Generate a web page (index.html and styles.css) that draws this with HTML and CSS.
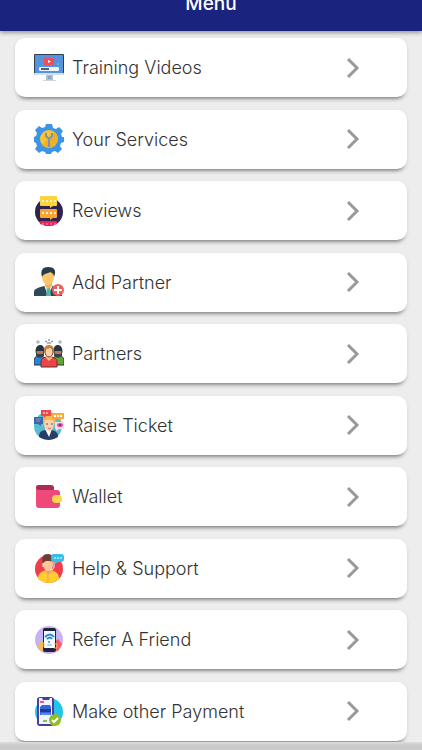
FILE: index.html
```html
<!doctype html>
<html lang="en">
<head>
	<meta charset="utf-8">
	<meta name="viewport" content="width=device-width, initial-scale=1">
	<title>Menu</title>
	<link rel="stylesheet" href="styles.css">
</head>
<body>

<header class="topbar">
	<h1>Menu</h1>
</header>

<nav class="menu">
	<a class="item" href="#training">
		<svg class="icon" viewBox="0 0 30 30">
			<rect x="0" y="1" width="30" height="21" rx="1" fill="#2f3e50"/>
			<rect x="1" y="2" width="28" height="18" fill="#5792dc"/>
			<path d="M0 20h30v1a1 1 0 0 1-1 1H1a1 1 0 0 1-1-1z" fill="#d5dfea"/>
			<rect x="10" y="5" width="10" height="7" rx="1" fill="#f04b58"/>
			<path d="M14 7l3 1.500-3 1.500z" fill="#fff"/>
			<circle cx="24" cy="11" r="1" fill="#4fd39a"/>
			<rect x="5" y="14" width="20" height="4" rx="1" fill="#eef4fb"/>
			<rect x="7" y="15" width="8" height="2" fill="#47627c"/>
			<path d="M12 22h7v5h-7z" fill="#b1bfd3"/>
			<path d="M14 23h3v3h-3z" fill="#8da4c4"/>
			<path d="M9 27h13v1H9z" fill="#cbd4e0"/>
		</svg>
		<span class="label">Training Videos</span>
		<svg class="arrow" viewBox="0 0 12 20"><path d="M1 1l9 9-9 9"/></svg>
	</a>
	<a class="item" href="#services">
		<svg class="icon" viewBox="0 0 30 30">
			<path d="M12 0h6l1 4 3 1 3-2 4 4-2 3 1 3 2 0v5l-3 1-1 3 2 3-4 4-3-2-3 1-1 2h-5l-1-2-3-1-3 2-4-4 2-3-1-3-2-1v-5l2-1 1-3-2-3 4-4 3 2 3-1z" fill="#3c94e8"/>
			<circle cx="15" cy="15" r="9" fill="#f7c52f"/>
			<path d="M21 8a9 9 0 0 1-13 13z" fill="#edaf2c"/>
			<path d="M12 9v3l3 3 3-3V9M15 15v8" fill="none" stroke="#8293a3" stroke-width="2"/>
		</svg>
		<span class="label">Your Services</span>
		<svg class="arrow" viewBox="0 0 12 20"><path d="M1 1l9 9-9 9"/></svg>
	</a>
	<a class="item" href="#reviews">
		<svg class="icon" viewBox="0 0 30 30">
			<circle cx="15" cy="16" r="14" fill="#2e244f"/>
			<path d="M7 0h15a1 1 0 0 1 1 1v8a1 1 0 0 1-1 1h-3l-3 2v-2H7a1 1 0 0 1-1-1V1a1 1 0 0 1 1-1z" fill="#ffd33b"/>
			<path d="M7 13h15a1 1 0 0 1 1 1v7a1 1 0 0 1-1 1h-3l-3 2v-2H7a1 1 0 0 1-1-1v-7a1 1 0 0 1 1-1z" fill="#fba52f"/>
			<path d="M6 26a1 1 0 0 1 1-1h15a1 1 0 0 1 1 1v2q-8 4-17 0z" fill="#e92458"/>
			<path d="M8 5h14M8 17h14" stroke="#fff6cf" stroke-width="2" stroke-dasharray="2 2"/>
			<path d="M8 28h14" stroke="#ff9db5" stroke-dasharray="2 2"/>
		</svg>
		<span class="label">Reviews</span>
		<svg class="arrow" viewBox="0 0 12 20"><path d="M1 1l9 9-9 9"/></svg>
	</a>
	<a class="item" href="#add-partner">
		<svg class="icon" viewBox="0 0 30 30">
			<path d="M0 29v-4c0-3 3-4 10-6h9c6 2 9 3 9 6v4z" fill="#30475a"/>
			<path d="M10 18l4 11 5-11z" fill="#f5f8f8"/>
			<path d="M13 20h3l1 9h-5z" fill="#4fb8aa"/>
			<path d="M11 15h7v4l-4 3-3-3z" fill="#edb45d"/>
			<ellipse cx="14" cy="10" rx="6" ry="8" fill="#fdc66c"/>
			<path d="M8 10C6 3 9 0 14 0c6 0 9 3 6 10 0-3-2-4-4-5-3 2-6 1-8 5z" fill="#273a4b"/>
			<circle cx="24" cy="23" r="6" fill="#ed615c"/>
			<path d="M24 19v8M20 23h8" stroke="#fff" stroke-width="2"/>
		</svg>
		<span class="label">Add Partner</span>
		<svg class="arrow" viewBox="0 0 12 20"><path d="M1 1l9 9-9 9"/></svg>
	</a>
	<a class="item" href="#partners">
		<svg class="icon" viewBox="0 0 30 30">
			<path d="M0 26v-5c0-3 3-4 6-4s5 1 5 4v5z" fill="#2786d4" stroke="#26323f"/>
			<path d="M19 26v-5c0-3 2-4 5-4s6 1 6 4v5z" fill="#61a630" stroke="#26323f"/>
			<ellipse cx="6" cy="12" rx="4" ry="5" fill="#b77954" stroke="#26323f"/>
			<ellipse cx="24" cy="12" rx="4" ry="5" fill="#b77954" stroke="#26323f"/>
			<path d="M2 12c-1-7 8-8 8-2v2H2zM28 12c1-7-8-8-8-2v2h8z" fill="#2a3440"/>
			<path d="M2 15h8v2l-4 2-4-2zM20 15h8v2l-4 2-4-2z" fill="#36414d"/>
			<path d="M7 28v-5c0-4 3-5 8-5s8 1 8 5v5z" fill="#ec4547" stroke="#6c2f37"/>
			<path d="M12 16h6v3l-3 3-3-3z" fill="#efb989"/>
			<ellipse cx="15" cy="13" rx="4" ry="5" fill="#ffd2a2" stroke="#71432e"/>
			<path d="M10 12c-1-8 11-8 10 0l-3-3-5 1z" fill="#c98239"/>
			<path d="M4 1v4M2 3h4M26 1v4M24 3h4" stroke="#9ba3ab"/>
			<path d="M11 2l2 1M15 0v2M19 2l-2 1M13 4h4" stroke="#68717c"/>
		</svg>
		<span class="label">Partners</span>
		<svg class="arrow" viewBox="0 0 12 20"><path d="M1 1l9 9-9 9"/></svg>
	</a>
	<a class="item" href="#ticket">
		<svg class="icon" viewBox="0 0 30 30">
			<circle cx="14" cy="16" r="14" fill="#58bdd0"/>
			<path d="M5 27c0-5 2-6 6-7h7c4 1 6 3 6 7q-9 6-19 0z" fill="#293e65"/>
			<path d="M11 19h7l-3 8z" fill="#fff"/>
			<ellipse cx="15" cy="14" rx="5" ry="7" fill="#ffd1ad"/>
			<path d="M9 15c-2-8 2-10 6-10s8 3 6 10l-2-5h-8z" fill="#f4b950"/>
			<path d="M12 14h2M17 14h2" stroke="#704e45"/>
			<path d="M14 18q1 1 3 0" fill="none" stroke="#d36d66"/>
			<path d="M7 0h10v6h-5l-2 2V6H7z" fill="#e94a4e"/>
			<path d="M9 3h6" stroke="#fff" stroke-dasharray="2 1"/>
			<path d="M18 3h12v6h-3v2l-3-2h-6z" fill="#fcaa35"/>
			<path d="M20 6h8" stroke="#fff" stroke-width="2" stroke-dasharray="2 1"/>
			<path d="M0 7h9v7H7v2l-3-2H0z" fill="#3c66a7"/>
			<path d="M2 9h5M2 11h4" stroke="#7b9cd4"/>
			<path d="M21 12h9v7h-5l-3 2v-2h-1z" fill="#f8dcec"/>
			<ellipse cx="26" cy="15" rx="3" ry="2" fill="#df4f9b"/>
			<circle cx="26" cy="15" r="1" fill="#573078"/>
		</svg>
		<span class="label">Raise Ticket</span>
		<svg class="arrow" viewBox="0 0 12 20"><path d="M1 1l9 9-9 9"/></svg>
	</a>
	<a class="item" href="#wallet">
		<svg class="icon" viewBox="0 0 30 30">
			<path d="M2 5a2 2 0 0 1 2-2h13a3 3 0 0 1 3 3v4H2z" fill="#aa2c58"/>
			<path d="M2 5q0 3 3 3h18a3 3 0 0 1 3 3v12a3 3 0 0 1-3 3H5a3 3 0 0 1-3-3z" fill="#ed4a79"/>
			<rect x="18" y="13" width="10" height="8" rx="4" fill="#ffd34e"/>
		</svg>
		<span class="label">Wallet</span>
		<svg class="arrow" viewBox="0 0 12 20"><path d="M1 1l9 9-9 9"/></svg>
	</a>
	<a class="item" href="#help">
		<svg class="icon" viewBox="0 0 30 30">
			<circle cx="15" cy="16" r="14" fill="#f03d4b"/>
			<path d="M4 26c0-5 2-7 8-9h5c6 2 8 4 8 9q-10 8-21 0z" fill="#ffcc32"/>
			<path d="M14 22v8" stroke="#f3ad20"/>
			<path d="M11 15h7v4l-4 3-3-3z" fill="#f2a36f"/>
			<ellipse cx="14" cy="11" rx="5" ry="7" fill="#ffc694"/>
			<path d="M9 11C7 4 9 1 14 1c4 0 6 3 5 7-4 1-8-2-10 3z" fill="#684036"/>
			<path d="M9 10v4M20 9v5q0 3-4 3" fill="none" stroke="#f4f5fa" stroke-width="1"/>
			<path d="M20 1h7a3 3 0 0 1 3 3v2a3 3 0 0 1-3 3h-3l-4 3 1-3h-1a3 3 0 0 1-3-3V4a3 3 0 0 1 3-3z" fill="#35bfe8"/>
			<path d="M20 5h8" stroke="#fff" stroke-width="1" stroke-dasharray="2 1"/>
		</svg>
		<span class="label">Help &amp; Support</span>
		<svg class="arrow" viewBox="0 0 12 20"><path d="M1 1l9 9-9 9"/></svg>
	</a>
	<a class="item" href="#refer">
		<svg class="icon" viewBox="0 0 30 30">
			<circle cx="15" cy="15" r="14" fill="#c5b4f5"/>
			<path d="M5 18l5-2v10H7q-3-2-3-5z" fill="#f6b851"/>
			<path d="M20 17l4-3 4 5-4 7-5-1z" fill="#f05c67"/>
			<rect x="9" y="3" width="13" height="24" rx="2" fill="#20233f"/>
			<rect x="10" y="6" width="11" height="17" fill="#f5fbff"/>
			<path d="M11 12q5-5 9 0M13 14q3-3 5 0" fill="none" stroke="#268cd6" stroke-width="2"/>
			<circle cx="15" cy="17" r="1" fill="#268cd6"/>
			<path d="M13 20h5" stroke="#88a7dd"/>
			<path d="M5 18h5v3H7M20 19h3v4h-3" fill="none" stroke="#f7b553" stroke-width="1"/>
		</svg>
		<span class="label">Refer A Friend</span>
		<svg class="arrow" viewBox="0 0 12 20"><path d="M1 1l9 9-9 9"/></svg>
	</a>
	<a class="item" href="#payment">
		<svg class="icon" viewBox="0 0 30 30">
			<circle cx="15" cy="16" r="14" fill="#22c5e9"/>
			<rect x="3" y="1" width="17" height="29" rx="3" fill="#52399e"/>
			<path d="M5 2h3l1 2h6l1-2h2v26H5z" fill="#eef6ff"/>
			<path d="M6 6h4" stroke="#ed5b82" stroke-width="2"/>
			<path d="M8 9h8l1 2v8H6v-8z" fill="#3765db"/>
			<path d="M6 13h11v3H6z" fill="#243894"/>
			<path d="M7 18h9" stroke="#78b4ff"/>
			<path d="M9 25h4" stroke="#8bc34a" stroke-width="2"/>
			<circle cx="21" cy="24" r="6" fill="#91bd24"/>
			<path d="M18 24l2 2 4-4" fill="none" stroke="#fff" stroke-width="2"/>
		</svg>
		<span class="label">Make other Payment</span>
		<svg class="arrow" viewBox="0 0 12 20"><path d="M1 1l9 9-9 9"/></svg>
	</a>
</nav>

<footer class="bottom"></footer>

</body>
</html>
```
FILE: styles.css
```css
*{ box-sizing: border-box; margin: 0; padding: 0}
body{ display: flex; flex-direction: column; min-height: 100vh; background: #ededed; font-family: Inter, "Liberation Sans", sans-serif}

.topbar{ display: flex; justify-content: center; align-items: flex-end; height: 31px; padding-bottom: 15px; overflow: hidden; background: #1a237e; box-shadow: 0 2px 4px rgba(0,0,0,.35)}
.topbar h1{ color: #fff; font-size: 19px; font-weight: 500; line-height: 24px}

.menu{ display: flex; flex: 1; flex-direction: column; justify-content: space-between; gap: 12px; padding: 7px 15px 1px}
.item{ display: flex; align-items: center; height: 59px; padding: 0 48px 0 19px; border-radius: 10px; background: #fff; box-shadow: 0 5px 4px -4px rgba(0,0,0,.5), 0 2px 4px rgba(0,0,0,.1); color: #333; text-decoration: none}
.icon{ flex: none; width: 30px; height: 30px}
.label{ flex: 1; margin-left: 8px; font-size: 18px; font-weight: 300; line-height: 25px}
.arrow{ flex: none; width: 12px; height: 20px; overflow: visible; fill: none; stroke: #999; stroke-width: 3}

.bottom{ height: 8px; background: linear-gradient(#dedede, #cbcbcb 3px)}
```
